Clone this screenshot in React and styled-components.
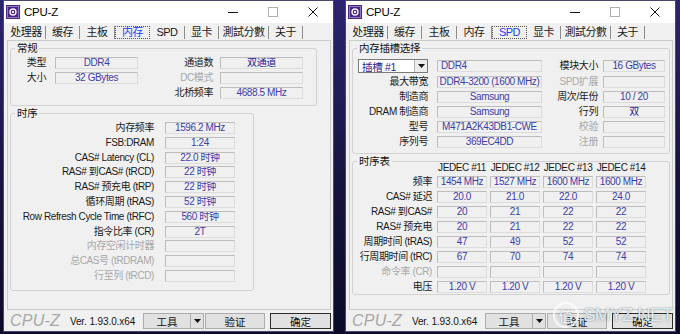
import React from 'react';
import styled, { createGlobalStyle, css } from 'styled-components';

const FONT = `"Liberation Sans", "Noto Sans CJK SC", sans-serif`;

const GlobalStyle = createGlobalStyle`
  html, body { margin: 0; padding: 0; }
  body {
    width: 680px; height: 334px; overflow: hidden;
    font-family: ${FONT};
    background: #15123c;
  }
  * { box-sizing: border-box; }
`;

const Desktop = styled.div`
  position: relative;
  width: 680px;
  height: 334px;
  display: flex;
  align-items: flex-start;
  gap: 11px;
  padding-left: 3px;
  background: linear-gradient(180deg, #2c2470 0%, #17133f 55%, #0c0a28 100%);
`;

const Window = styled.div`
  width: 331px;
  height: 332px;
  border: 1px solid #4a4670;
  background: #f0f0f0;
  display: flex;
  flex-direction: column;
`;

const TitleBar = styled.div`
  height: 22px;
  background: #ffffff;
  display: flex;
  align-items: center;
  padding-left: 2px;
`;

const TitleText = styled.span`
  margin-left: 4px;
  font-size: 11.5px;
  letter-spacing: -0.2px;
  color: #000;
`;

const CaptionButtons = styled.div`
  margin-left: auto;
  display: flex;
`;

const CaptionButton = styled.div`
  width: 40px;
  height: 22px;
  display: flex;
  align-items: center;
  justify-content: center;
`;

const TabStrip = styled.div`
  height: 17px;
  display: flex;
  padding-left: 3px;
`;

const Tab = styled.div`
  width: ${p => p.$w}px;
  height: 13px;
  margin-top: 3px;
  display: flex;
  align-items: center;
  justify-content: center;
  font-size: 11px;
  line-height: 13px;
  letter-spacing: -0.5px;
  white-space: nowrap;
  color: #1b1b1b;
  border-right: 1px solid #8c8c8c;
  ${p => p.$active && css`
    color: #1f3cff;
    border: 1px dotted #555;
  `}
`;

const Panel = styled.div`
  margin: 0 2px 0 3px;
  height: 270px;
  border: 1px solid #cbcbcb;
  padding: 7px 2px 0 2px;
  display: flex;
  flex-direction: column;
  gap: 7px;
`;

const Group = styled.div`
  position: relative;
  width: ${p => p.$w}px;
  border: 1px solid #d2d2d2;
  border-radius: 3px;
  padding: ${p => p.$pad};
`;

const Caption = styled.span`
  position: absolute;
  top: -7px;
  left: 4px;
  padding: 0 2px;
  background: #f0f0f0;
  font-size: 10.5px;
  line-height: 13px;
  letter-spacing: -0.3px;
  color: #111;
`;

const FormGrid = styled.div`
  display: grid;
  grid-template-columns: ${p => p.$cols};
  grid-template-rows: ${p => p.$rows};
  column-gap: ${p => p.$cgap || 0}px;
  row-gap: ${p => p.$rgap}px;
  align-items: center;
`;

const Label = styled.div`
  text-align: right;
  padding-right: ${p => p.$pr}px;
  font-size: 10px;
  line-height: 12px;
  letter-spacing: -0.4px;
  white-space: nowrap;
  color: ${p => (p.$dim ? '#a8a8a8' : '#1a1a1a')};
`;

const HeadCell = styled.div`
  text-align: center;
  font-size: 10px;
  line-height: 11px;
  letter-spacing: -0.4px;
  white-space: nowrap;
  color: #1a1a1a;
`;

const ValueBox = styled.div`
  height: 12px;
  border: 1px solid;
  border-color: #bdbdbd #dcdcdc #dcdcdc #bdbdbd;
  background: #f0f0f0;
  font-size: 10px;
  line-height: 10px;
  letter-spacing: -0.4px;
  white-space: nowrap;
  overflow: hidden;
  text-align: ${p => p.$align || 'center'};
  padding-left: ${p => (p.$align === 'left' ? 3 : 0)}px;
  color: ${p => (p.$strong ? '#23239c' : '#3c3cac')};
`;

const Combo = styled.div`
  margin-left: 5px;
  width: 70px;
  height: 14px;
  border: 1px solid #7a7a7a;
  background: #fff;
  display: flex;
  align-items: center;
`;

const ComboText = styled.span`
  flex: 1;
  padding-left: 3px;
  font-size: 10.5px;
  letter-spacing: -0.3px;
  color: #1c1c8f;
  white-space: nowrap;
`;

const ComboArrow = styled.span`
  width: 13px;
  height: 12px;
  border-left: 1px solid #b5b5b5;
  background: #ececec;
  display: flex;
  align-items: center;
  justify-content: center;
`;

const BottomBar = styled.div`
  height: 21px;
  display: flex;
  align-items: center;
  padding: 1px 2px 0 6px;
`;

const Logo = styled.span`
  font-size: 16px;
  font-style: italic;
  color: #a7a7a7;
  letter-spacing: 0.2px;
`;

const Version = styled.span`
  margin-left: 10px;
  font-size: 10px;
  letter-spacing: -0.1px;
  color: #151515;
`;

const Buttons = styled.div`
  margin-left: auto;
  display: flex;
  align-items: center;
`;

const Button = styled.div`
  width: ${p => p.$w}px;
  height: 16px;
  margin-left: ${p => p.$ml || 0}px;
  border: 1px solid ${p => (p.$default ? '#2b2b2b' : '#adadad')};
  background: #e1e1e1;
  display: flex;
  align-items: center;
  justify-content: center;
  font-size: 10.5px;
  color: #111;
`;

const SplitPart = styled.span`
  flex: ${p => (p.$arrow ? '0 0 13px' : '1')};
  height: 100%;
  display: flex;
  align-items: center;
  justify-content: center;
  border-left: ${p => (p.$arrow ? '1px solid #adadad' : 'none')};
`;

const Watermark = styled.div`
  position: absolute;
  left: 553px;
  top: 302px;
  display: flex;
  align-items: center;
  gap: 4px;
  pointer-events: none;
`;

const WmBadge = styled.span`
  width: 26px;
  height: 26px;
  border-radius: 50%;
  border: 2px solid rgba(255, 255, 255, 0.75);
  display: flex;
  align-items: center;
  justify-content: center;
  font-size: 15px;
  color: rgba(255, 255, 255, 0.85);
  text-shadow: 0 0 2px rgba(0, 0, 0, 0.35);
`;

const WmText = styled.span`
  font-size: 19px;
  letter-spacing: -0.8px;
  color: rgba(228, 244, 250, 0.92);
  text-shadow: 0 0 2px rgba(0, 0, 0, 0.45);
`;

const TABS = [
  ['处理器', 39], ['缓存', 34], ['主板', 35], ['内存', 35],
  ['SPD', 35], ['显卡', 34], ['測試分數', 50], ['关于', 34],
];

const AppIcon = () => (
  <svg width="14" height="14" viewBox="0 0 14 14">
    <rect x="0" y="0" width="14" height="14" fill="#4a2785" />
    <rect x="1.5" y="1.5" width="11" height="11" fill="none" stroke="#8f78c4" strokeWidth="1" />
    <circle cx="7" cy="7" r="3" fill="none" stroke="#f2eefc" strokeWidth="1.4" />
    <rect x="6" y="6" width="2" height="2" fill="#f2eefc" />
  </svg>
);

const TitleBarView = () => (
  <TitleBar>
    <AppIcon />
    <TitleText>CPU-Z</TitleText>
    <CaptionButtons>
      <CaptionButton>
        <svg width="10" height="10" viewBox="0 0 10 10"><line x1="0" y1="5.5" x2="10" y2="5.5" stroke="#111" strokeWidth="1" /></svg>
      </CaptionButton>
      <CaptionButton>
        <svg width="10" height="10" viewBox="0 0 10 10"><rect x="0.5" y="0.5" width="9" height="9" fill="none" stroke="#b0b0b0" strokeWidth="1" /></svg>
      </CaptionButton>
      <CaptionButton>
        <svg width="10" height="10" viewBox="0 0 10 10"><path d="M0.5 0.5 L9.5 9.5 M9.5 0.5 L0.5 9.5" stroke="#111" strokeWidth="1" /></svg>
      </CaptionButton>
    </CaptionButtons>
  </TitleBar>
);

const Tabs = ({ active }) => (
  <TabStrip>
    {TABS.map(([t, w]) => (
      <Tab key={t} $w={w} $active={t === active}>{t}</Tab>
    ))}
  </TabStrip>
);

const DownTri = () => (
  <svg width="7" height="4" viewBox="0 0 7 4"><path d="M0 0 H7 L3.5 4 Z" fill="#111" /></svg>
);

const Bottom = () => (
  <BottomBar>
    <Logo>CPU-Z</Logo>
    <Version>Ver. 1.93.0.x64</Version>
    <Buttons>
      <Button $w={61}>
        <SplitPart>工具</SplitPart>
        <SplitPart $arrow><DownTri /></SplitPart>
      </Button>
      <Button $w={60} $ml={1}>验证</Button>
      <Button $w={61} $ml={5} $default>确定</Button>
    </Buttons>
  </BottomBar>
);

const TIMINGS = [
  ['内存频率', '1596.2 MHz'],
  ['FSB:DRAM', '1:24'],
  ['CAS# Latency (CL)', '22.0 时钟'],
  ['RAS# 到CAS# (tRCD)', '22 时钟'],
  ['RAS# 预充电 (tRP)', '22 时钟'],
  ['循环周期 (tRAS)', '52 时钟'],
  ['Row Refresh Cycle Time (tRFC)', '560 时钟'],
  ['指令比率 (CR)', '2T'],
  ['内存空闲计时器', '', true],
  ['总CAS号 (tRDRAM)', '', true],
  ['行至列 (tRCD)', '', true],
];

const MemoryWindow = () => (
  <Window>
    <TitleBarView />
    <Tabs active="内存" />
    <Panel>
      <Group $w={307} $pad="8px 0 6px 0">
        <Caption>常规</Caption>
        <FormGrid $cols="44px 83px 82px 83px" $rows="repeat(3, 12px)" $rgap={3}>
          <Label $pr={9}>类型</Label>
          <ValueBox>DDR4</ValueBox>
          <Label $pr={7}>通道数</Label>
          <ValueBox $strong>双通道</ValueBox>
          <Label $pr={9}>大小</Label>
          <ValueBox>32 GBytes</ValueBox>
          <Label $pr={7} $dim>DC模式</Label>
          <ValueBox />
          <span />
          <span />
          <Label $pr={7}>北桥频率</Label>
          <ValueBox>4688.5 MHz</ValueBox>
        </FormGrid>
      </Group>
      <Group $w={244} $pad="8px 0 8px 0">
        <Caption>时序</Caption>
        <FormGrid $cols="154px 70px" $rows="repeat(11, 12px)" $rgap={2.8}>
          {TIMINGS.map(([l, v, dim]) => (
            <React.Fragment key={l}>
              <Label $pr={11} $dim={dim}>{l}</Label>
              <ValueBox>{v}</ValueBox>
            </React.Fragment>
          ))}
        </FormGrid>
      </Group>
    </Panel>
    <Bottom />
  </Window>
);

const SLOT_ROWS = [
  ['最大带宽', 'DDR4-3200 (1600 MHz)', 'SPD扩展', '', true],
  ['制造商', 'Samsung', '周次/年份', '10 / 20'],
  ['DRAM 制造商', 'Samsung', '行列', '双'],
  ['型号', 'M471A2K43DB1-CWE', '校验', '', true],
  ['序列号', '369EC4DD', '注册', '', true],
];

const JEDEC = [
  ['频率', ['1454 MHz', '1527 MHz', '1600 MHz', '1600 MHz']],
  ['CAS# 延迟', ['20.0', '21.0', '22.0', '24.0']],
  ['RAS# 到CAS#', ['20', '21', '22', '22']],
  ['RAS# 预充电', ['20', '21', '22', '22']],
  ['周期时间 (tRAS)', ['47', '49', '52', '52']],
  ['行周期时间 (tRC)', ['67', '70', '74', '74']],
  ['命令率 (CR)', ['', '', '', ''], true],
  ['电压', ['1.20 V', '1.20 V', '1.20 V', '1.20 V']],
];

const SpdWindow = () => (
  <Window>
    <TitleBarView />
    <Tabs active="SPD" />
    <Panel>
      <Group $w={318} $pad="10px 0 5px 0">
        <Caption>内存插槽选择</Caption>
        <FormGrid $cols="84px 105px 61px 62px" $rows="14px repeat(5, 12px)" $rgap={3}>
          <Combo>
            <ComboText>插槽 #1</ComboText>
            <ComboArrow><DownTri /></ComboArrow>
          </Combo>
          <ValueBox $align="left">DDR4</ValueBox>
          <Label $pr={5}>模块大小</Label>
          <ValueBox>16 GBytes</ValueBox>
          {SLOT_ROWS.map(([l1, v1, l2, v2, dim]) => (
            <React.Fragment key={l1}>
              <Label $pr={9}>{l1}</Label>
              <ValueBox>{v1}</ValueBox>
              <Label $pr={5} $dim={dim}>{l2}</Label>
              <ValueBox $strong={v2 === '双'}>{v2}</ValueBox>
            </React.Fragment>
          ))}
        </FormGrid>
      </Group>
      <Group $w={318} $pad="0 0 1px 0">
        <Caption>时序表</Caption>
        <FormGrid $cols="81px repeat(4, 50px)" $rows="11px repeat(8, 12px)" $rgap={3} $cgap={3}>
          <span />
          {['JEDEC #11', 'JEDEC #12', 'JEDEC #13', 'JEDEC #14'].map(h => (
            <HeadCell key={h}>{h}</HeadCell>
          ))}
          {JEDEC.map(([l, vals, dim]) => (
            <React.Fragment key={l}>
              <Label $pr={2} $dim={dim}>{l}</Label>
              {vals.map((v, i) => <ValueBox key={i}>{v}</ValueBox>)}
            </React.Fragment>
          ))}
        </FormGrid>
      </Group>
    </Panel>
    <Bottom />
  </Window>
);

export default function App() {
  return (
    <>
      <GlobalStyle />
      <Desktop>
        <MemoryWindow />
        <SpdWindow />
        <Watermark>
          <WmBadge>值</WmBadge>
          <WmText>SMYZ.NET</WmText>
        </Watermark>
      </Desktop>
    </>
  );
}
